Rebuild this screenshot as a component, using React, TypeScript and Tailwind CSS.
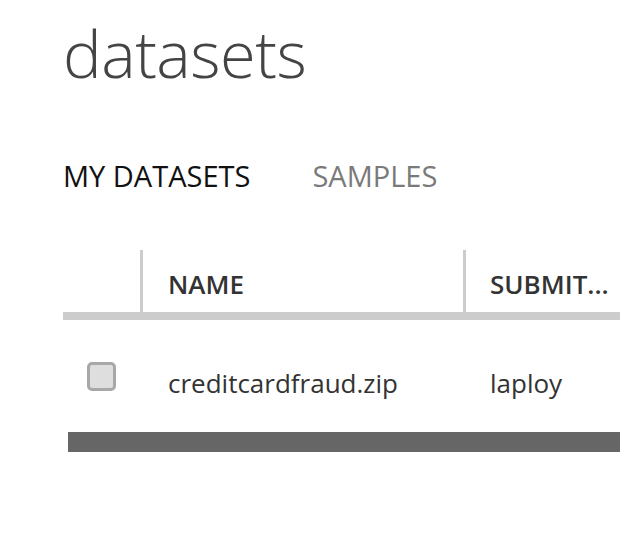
import React from "react";

export default function App() {
  return (
    <div className="w-[620px] h-[541px] bg-white overflow-hidden font-['Open_Sans',sans-serif]">
      <div className="pl-[63px] pt-[8px]">
        <h1 className="text-[65px] font-light leading-[90px] text-[#444] tracking-[-0.5px]">datasets</h1>
        <div className="flex gap-[62px] mt-[58px] text-[29px] leading-[40px]">
          <span className="text-[#111]">MY DATASETS</span>
          <span className="text-[#7a7a7a]">SAMPLES</span>
        </div>
        <div className="mt-[54px] w-[700px]">
          <div className="flex h-[62px] border-b-[8px] border-[#cccccc] box-content">
            <div className="w-[77px] shrink-0" />
            <div className="w-[3px] bg-[#cccccc] shrink-0" />
            <div className="w-[320px] shrink-0 flex items-center pl-[25px] text-[26px] font-semibold text-[#333] pt-[6px]">NAME</div>
            <div className="w-[3px] bg-[#cccccc] shrink-0" />
            <div className="flex-1 flex items-center pl-[24px] text-[26px] font-semibold text-[#333] pt-[6px]">SUBMIT...</div>
          </div>
          <div className="flex h-[112px] items-center">
            <div className="w-[80px] shrink-0 pl-[24px]">
              <div className="w-[29px] h-[29px] rounded-[5px] border-[3px] border-[#a8a8a8] bg-[#dedede]" />
            </div>
            <div className="w-[323px] shrink-0 pl-[25px] text-[26px] text-[#333] pt-[14px]">creditcardfraud.zip</div>
            <div className="flex-1 pl-[24px] text-[26px] text-[#333] pt-[14px]">laploy</div>
          </div>
          <div className="ml-[5px] h-[20px] bg-[#666666]" />
        </div>
      </div>
    </div>
  );
}
